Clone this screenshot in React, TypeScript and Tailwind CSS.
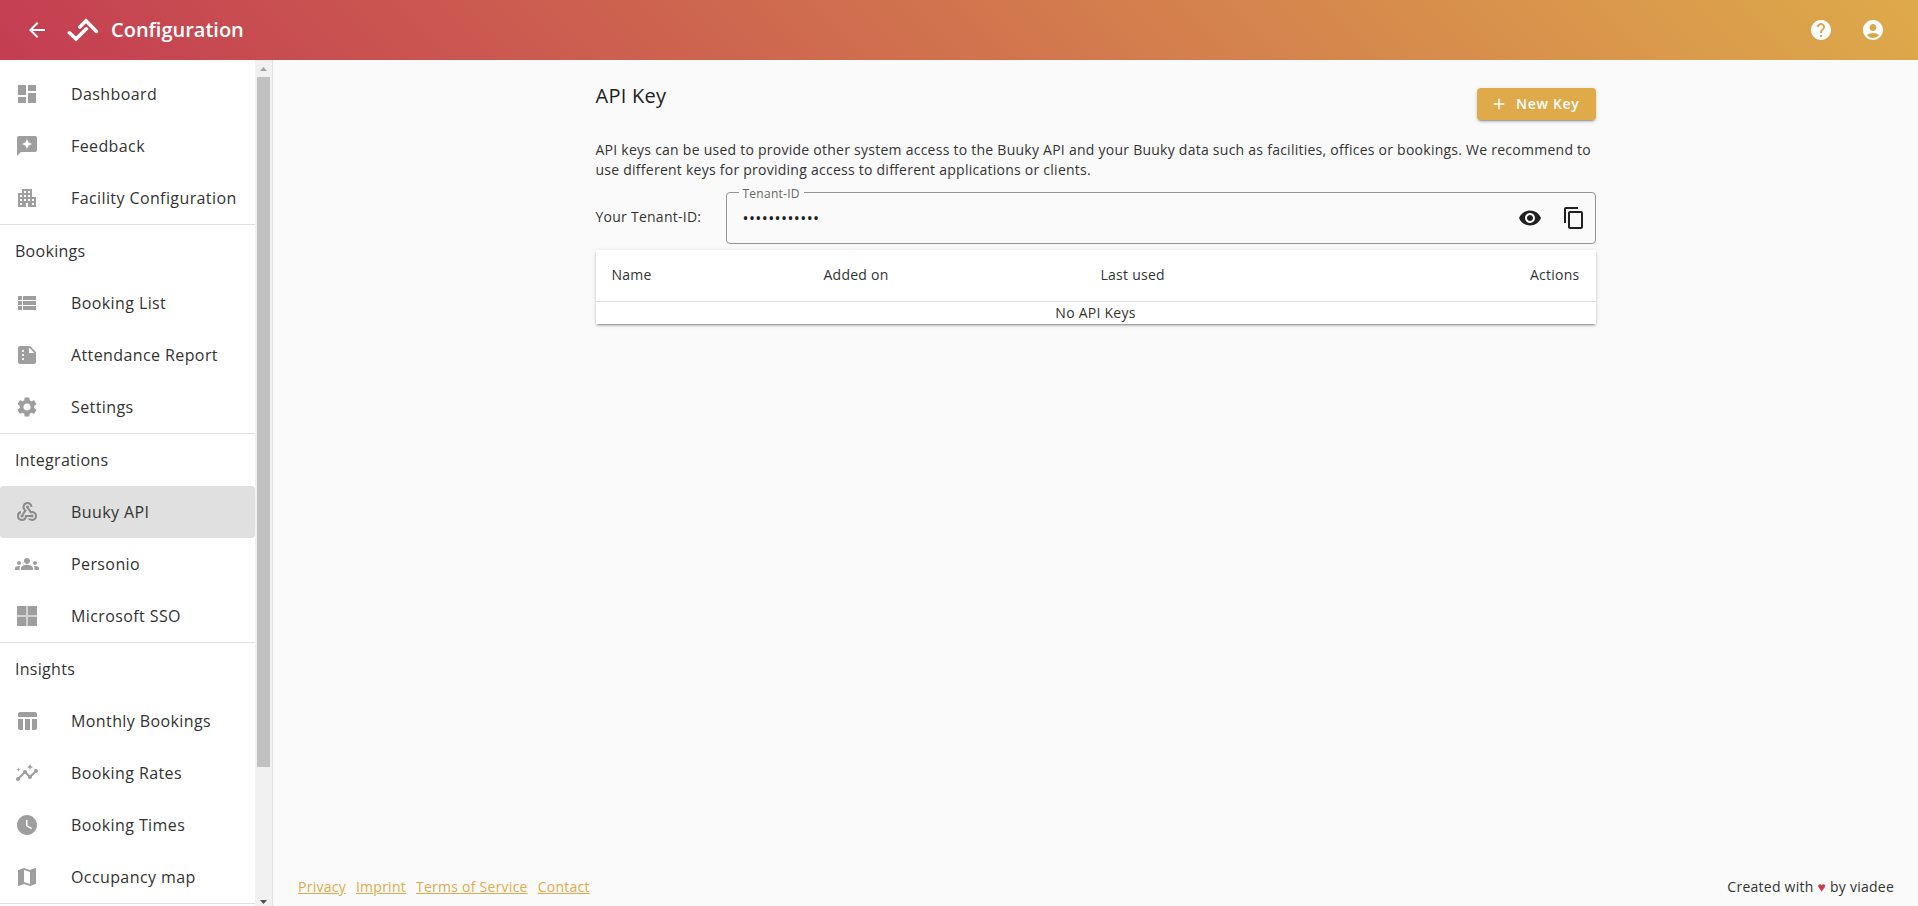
import React, { useState } from 'react';
import type { IconType } from 'react-icons';
import {
  MdAccountCircle,
  MdAdd,
  MdApartment,
  MdArrowBack,
  MdContentCopy,
  MdDashboard,
  MdGroups,
  MdHelp,
  MdInsights,
  MdMap,
  MdReviews,
  MdSettings,
  MdSummarize,
  MdTableChart,
  MdViewList,
  MdVisibility,
  MdWatchLater,
  MdWebhook,
} from 'react-icons/md';

interface NavItem {
  label: string;
  icon: IconType | typeof MicrosoftIcon;
  active?: boolean;
}

interface NavSection {
  title?: string;
  items: NavItem[];
}

function MicrosoftIcon({ size = 24 }: { size?: number }) {
  return (
    <svg width={size} height={size} viewBox="0 0 24 24" fill="currentColor">
      <path opacity="0.45" d="M2 2h20v20H2z" />
      <path d="M2 2h9v9H2zM13 2h9v9h-9zM2 13h9v9H2zM13 13h9v9h-9z" />
    </svg>
  );
}

function Logo() {
  return (
    <svg
      width="32"
      height="26"
      viewBox="0 0 32 26"
      fill="none"
      stroke="currentColor"
      strokeWidth="3.6"
      strokeLinecap="round"
    >
      <path d="M2.4 15.8 L9 22 L19.4 11.8" />
      <path d="M12.8 10 L19 3.8 L29.4 14.4" />
    </svg>
  );
}

const sections: NavSection[] = [
  {
    items: [
      { label: 'Dashboard', icon: MdDashboard },
      { label: 'Feedback', icon: MdReviews },
      { label: 'Facility Configuration', icon: MdApartment },
    ],
  },
  {
    title: 'Bookings',
    items: [
      { label: 'Booking List', icon: MdViewList },
      { label: 'Attendance Report', icon: MdSummarize },
      { label: 'Settings', icon: MdSettings },
    ],
  },
  {
    title: 'Integrations',
    items: [
      { label: 'Buuky API', icon: MdWebhook, active: true },
      { label: 'Personio', icon: MdGroups },
      { label: 'Microsoft SSO', icon: MicrosoftIcon },
    ],
  },
  {
    title: 'Insights',
    items: [
      { label: 'Monthly Bookings', icon: MdTableChart },
      { label: 'Booking Rates', icon: MdInsights },
      { label: 'Booking Times', icon: MdWatchLater },
      { label: 'Occupancy map', icon: MdMap },
    ],
  },
];

const footerLinks = ['Privacy', 'Imprint', 'Terms of Service', 'Contact'];

function Header() {
  return (
    <header className="h-15 shrink-0 flex items-center pl-[25px] pr-[33px] text-white bg-[linear-gradient(45deg,#c43d52,#deaa4a)]">
      <button aria-label="Back">
        <MdArrowBack size={24} />
      </button>
      <div className="ml-[18px] mr-3">
        <Logo />
      </div>
      <h1 className="text-xl font-semibold">Configuration</h1>
      <div className="ml-auto flex gap-7">
        <button aria-label="Help">
          <MdHelp size={24} />
        </button>
        <button aria-label="Account">
          <MdAccountCircle size={24} />
        </button>
      </div>
    </header>
  );
}

function Sidebar() {
  return (
    <aside className="w-[273px] shrink-0 flex bg-white border-r border-[#e0e0e0] overflow-hidden">
      <nav className="flex-1 pt-2 text-base tracking-wide overflow-hidden">
        {sections.map((section, i) => (
          <div key={i} className="border-b border-[#e0e0e0]">
            {section.title && (
              <h3 className="h-13 flex items-center pl-[15px] tracking-[0.018em]">{section.title}</h3>
            )}
            {section.items.map(({ label, icon: Icon, active }) => (
              <a
                key={label}
                href="#"
                className={`h-13 flex items-center gap-8 pl-[15px] rounded whitespace-nowrap ${active ? 'bg-[#e0e0e0]' : ''}`}
              >
                <span className={active ? 'text-[#8b8b8b]' : 'text-[#9e9e9e]'}>
                  <Icon size={24} />
                </span>
                {label}
              </a>
            ))}
          </div>
        ))}
      </nav>

      {/* Scrollbar */}
      <div className="w-[17px] shrink-0 flex flex-col items-center bg-[#f1f1f1]">
        <svg width="17" height="17" className="shrink-0" fill="#a3a3a3">
          <path d="M5 11h7L8.5 7z" />
        </svg>
        <div className="w-[13px] h-[690px] bg-[#c1c1c1]" />
        <svg width="17" height="17" className="mt-auto shrink-0" fill="#505050">
          <path d="M5 11h7L8.5 15z" />
        </svg>
      </div>
    </aside>
  );
}

function TenantField() {
  const [visible, setVisible] = useState(false);

  return (
    <div className="flex items-center mt-0.5">
      <label htmlFor="tenant-id" className="w-[130px] shrink-0 pt-2">
        Your Tenant-ID:
      </label>
      <fieldset className="flex-1 h-[62px] border border-[#949494] rounded pl-3 pr-[9px]">
        <legend className="px-1 pt-1 text-xs leading-4 text-[#666]">Tenant-ID</legend>
        <div className="h-8 flex items-center pl-1 text-[#212121]">
          <input
            id="tenant-id"
            type={visible ? 'text' : 'password'}
            defaultValue="tenant-00001"
            readOnly
            className="flex-1 min-w-0 text-base tracking-wide bg-transparent outline-none"
          />
          <button aria-label="Show tenant ID" onClick={() => setVisible(!visible)}>
            <MdVisibility size={24} />
          </button>
          <button aria-label="Copy tenant ID" className="ml-5">
            <MdContentCopy size={24} />
          </button>
        </div>
      </fieldset>
    </div>
  );
}

function KeyTable() {
  return (
    <table className="w-full mt-1.5 table-fixed bg-white shadow-[0_3px_1px_-2px_rgba(0,0,0,0.2),0_2px_2px_0_rgba(0,0,0,0.14),0_1px_5px_0_rgba(0,0,0,0.12)]">
      <thead>
        <tr className="h-[51px] text-left border-b border-[#e0e0e0]">
          <th className="w-[212px] px-4 font-normal">Name</th>
          <th className="w-[277px] px-4 font-normal">Added on</th>
          <th className="px-4 font-normal">Last used</th>
          <th className="px-4 font-normal text-right">Actions</th>
        </tr>
      </thead>
      <tbody>
        <tr>
          <td colSpan={4} className="h-[23px] text-center">
            No API Keys
          </td>
        </tr>
      </tbody>
    </table>
  );
}

export default function App() {
  return (
    <div className="h-screen flex flex-col bg-[#fafafa] text-[#333] text-sm font-['Open_Sans',sans-serif]">
      <Header />
      <div className="flex-1 min-h-0 flex">
        <Sidebar />
        <div className="flex-1 min-w-0 flex flex-col tracking-[0.018em]">
          <main className="w-full max-w-[1000px] mx-auto flex-1 pt-5">
            <div className="flex items-start justify-between">
              <h2 className="text-xl leading-8 text-[#212121]">API Key</h2>
              <button className="mt-2 h-8 flex items-center gap-2 pl-[13px] pr-4 rounded bg-[#deaa4a] text-white font-semibold tracking-wider shadow-[0_3px_1px_-2px_rgba(0,0,0,0.2),0_2px_2px_0_rgba(0,0,0,0.14),0_1px_5px_0_rgba(0,0,0,0.12)]">
                <MdAdd size={18} />
                New Key
              </button>
            </div>
            <p className="mt-5 leading-5">
              API keys can be used to provide other system access to the Buuky API and your Buuky data such as
              facilities, offices or bookings. We recommend to use different keys for providing access to different
              applications or clients.
            </p>
            <TenantField />
            <KeyTable />
          </main>
          <footer className="flex items-center justify-between pl-[25px] pr-6 pb-[9px]">
            <div className="flex gap-2.5">
              {footerLinks.map((link) => (
                <a key={link} href="#" className="text-[#deaa4a] underline">
                  {link}
                </a>
              ))}
            </div>
            <p>
              Created with <span className="text-[#c43d52]">♥</span> by viadee
            </p>
          </footer>
        </div>
      </div>
    </div>
  );
}
